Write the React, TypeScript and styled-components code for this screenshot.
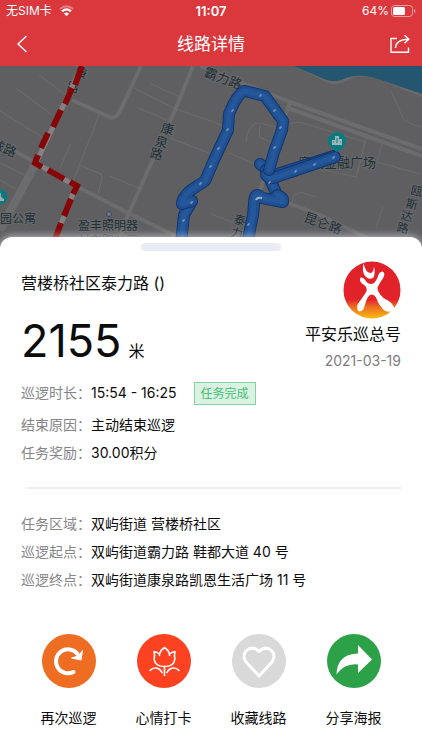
import React from "react";
import styled, { createGlobalStyle } from "styled-components";

const GlobalStyle = createGlobalStyle`
  * { box-sizing: border-box; }
  body {
    margin: 0;
    background: #fff;
    color: #0c0c0c;
    font-family: Inter, "Noto Sans CJK SC", sans-serif;
  }
  button { border: 0; padding: 0; background: none; color: inherit; font: inherit; cursor: pointer; }
  h1, h2, p, dl, dd { margin: 0; font-weight: 400; }
  svg { display: block; }
`;

const Page = styled.div`
  display: flex;
  flex-direction: column;
  min-height: 100vh;
`;

const TopBar = styled.header`
  background: #da383c;
  color: #fff;
`;

const StatusBar = styled.div`
  display: grid;
  grid-template-columns: 1fr auto 1fr;
  align-items: center;
  height: 22px;
  padding: 0 6px;
  font-size: 12px;
  line-height: 22px;
`;

const StatusGroup = styled.div<{ $end?: boolean }>`
  display: flex;
  align-items: center;
  justify-content: ${(p) => (p.$end ? "flex-end" : "flex-start")};
  gap: ${(p) => (p.$end ? 2 : 7)}px;
`;

const Clock = styled.time`
  font-size: 13px;
  font-weight: 600;
`;

const NavBar = styled.nav`
  display: grid;
  grid-template-columns: 44px 1fr 44px;
  align-items: center;
  height: 44px;
`;

const NavButton = styled.button`
  display: flex;
  align-items: center;
  justify-content: center;
  height: 44px;
`;

const PageTitle = styled.h1`
  font-size: 17px;
  line-height: 40px;
  text-align: center;
`;

const MapArea = styled.div`
  height: 184px;
  overflow: hidden;
  background: #5f5f62;

  svg { width: 100%; height: 100%; }
  text { font-family: "Noto Sans CJK SC", sans-serif; }
`;

const Sheet = styled.main`
  position: relative;
  flex: 1;
  margin-top: -13px;
  padding: 6px 21px 20px;
  border-radius: 12px 12px 0 0;
  background: #fff;
  box-shadow: 0 0 8px rgba(255, 255, 255, 0.7);
`;

const Handle = styled.div`
  width: 140px;
  height: 8px;
  margin: 0 auto;
  border-radius: 4px;
  background: #ebebf5;
`;

const Summary = styled.section`
  display: flex;
  justify-content: space-between;
  padding-top: 10px;
`;

const RouteBlock = styled.div`
  padding-top: 10px;
`;

const RouteName = styled.h2`
  font-size: 16px;
  line-height: 24px;
`;

const Distance = styled.p`
  display: flex;
  align-items: baseline;
  gap: 7px;
  margin-top: 18px;
  font-size: 16px;
  line-height: 56px;
`;

const DistanceValue = styled.span`
  font-size: 45px;
`;

const Account = styled.div`
  display: flex;
  flex-direction: column;
  align-items: flex-end;
`;

const AccountName = styled.p`
  margin-top: 3px;
  font-size: 16px;
  line-height: 24px;
`;

const DateText = styled.time`
  margin-top: 4px;
  color: #7d7d80;
  font-size: 14px;
  line-height: 22px;
`;

const Details = styled.dl<{ $top: number }>`
  display: grid;
  gap: 4px;
  padding-top: ${(p) => p.$top}px;
  font-size: 14px;
  line-height: 24px;
`;

const DetailRow = styled.div<{ $tagged: boolean }>`
  display: flex;
  align-items: center;
  margin-bottom: ${(p) => (p.$tagged ? 4 : 0)}px;
`;

const DetailLabel = styled.dt`
  flex: 0 0 69px;
  color: #858588;
  white-space: nowrap;
`;

const DetailValue = styled.dd`
  display: flex;
  align-items: center;
  gap: 17px;
`;

const Tag = styled.span`
  padding: 0 6px;
  border: 1px solid #82d3a0;
  background: #d9f2e2;
  color: #48bd75;
  font-size: 12px;
  line-height: 21px;
`;

const Divider = styled.hr`
  height: 2px;
  margin: 22px 0 0 6px;
  border: 0;
  background: #ededf3;
`;

const Actions = styled.footer`
  display: grid;
  grid-template-columns: repeat(4, 1fr);
  margin-top: 42px;
`;

const Action = styled.button`
  display: flex;
  flex-direction: column;
  align-items: center;
  gap: 18px;
  font-size: 14px;
  line-height: 24px;
  white-space: nowrap;
`;

const ActionDisc = styled.span<{ $color: string }>`
  display: flex;
  width: 54px;
  height: 54px;
  border-radius: 50%;
  background: ${(p) => p.$color};
`;

const WifiIcon = () => (
  <svg width="15" height="12" viewBox="0 0 15 12" fill="none" stroke="#fff" aria-hidden="true">
    <path d="M.8 4Q7.500-1.600 14.200 4" strokeWidth="1.800" opacity=".35" />
    <path d="M3 6.300Q7.500 2.600 12 6.300" strokeWidth="2.200" />
    <path d="M4.900 8.600Q7.500 6.400 10.100 8.600L7.500 11.200Z" fill="#fff" stroke="none" />
  </svg>
);

const BatteryIcon = () => (
  <svg width="25" height="12" viewBox="0 0 25 12" aria-hidden="true">
    <rect x=".5" y=".5" width="21" height="11" rx="3" fill="none" stroke="#fff" strokeOpacity=".5" />
    <rect x="2" y="2" width="12" height="8" rx="1.5" fill="#fff" />
    <path d="M23 4v4q1.500-.6 1.500-2T23 4Z" fill="#fff" opacity=".5" />
  </svg>
);

const BackIcon = () => (
  <svg width="12" height="18" viewBox="0 0 12 18" fill="none" stroke="#fff" strokeWidth="1.4" aria-hidden="true">
    <path d="M10.500 1 2 9l8.500 8" />
  </svg>
);

const ShareIcon = () => (
  <svg width="22" height="20" viewBox="0 0 22 20" fill="none" stroke="#fff" strokeWidth="1.4" aria-hidden="true">
    <path d="M8 4.500H2V18.300H19.500V13.500" />
    <path d="M6.500 14Q7 5.500 19.500 5.300M15.500 1.300l4.300 4-4.300 4" />
  </svg>
);

const Logo = () => (
  <svg width="58" height="58" viewBox="0 0 58 58" role="img" aria-label="平安乐巡">
    <defs>
      <linearGradient id="logoFill" x1="0" y1="0" x2="0" y2="1">
        <stop offset="0" stopColor="#df2129" />
        <stop offset=".67" stopColor="#e3232a" />
        <stop offset=".79" stopColor="#ec6a20" />
        <stop offset="1" stopColor="#fbbd10" />
      </linearGradient>
    </defs>
    <circle cx="29" cy="29" r="28.500" fill="url(#logoFill)" />
    <g fill="#fff">
      <path d="M20.500 2Q18.500 11 22.500 15.500Q26.500 19.500 30.500 16.500Q32.500 12 31 5.500Q30.500 11 28 12Q22.500 12 20.500 2Z" />
      <path d="M17.500 16.500Q20.500 16 22.500 19.500Q24.500 23 28.500 23Q32 22.500 34.500 16.500Q36 10.500 39.500 10.500Q42.500 11.500 40.500 16.500Q36.500 22 34.500 26.500Q34 31 40.500 37Q50.500 42 51 47Q48.500 53 41.500 49.500Q35.500 44 33.500 37.500Q31.500 33.500 28.500 33.500Q24.500 34 22 43.500Q20.500 50.500 16.500 50.500Q13 49.500 14.500 43.500Q20.500 35 23.500 30.500Q24.500 26.500 20.500 23.500Q15.500 20.500 17.500 16.500Z" />
    </g>
  </svg>
);

const Repeat = () => (
  <svg width="54" height="54" viewBox="0 0 54 54" aria-hidden="true">
    <path d="M31.500 38A12 12 0 1 1 35.500 20" fill="none" stroke="#fff" strokeWidth="4" strokeLinecap="round" />
    <path d="M40.500 16.500 39 26 29.500 24 34.500 22.500 38 20Z" fill="#fff" stroke="#fff" strokeWidth="1" strokeLinejoin="round" />
  </svg>
);

const Tulip = () => (
  <svg width="54" height="54" viewBox="0 0 54 54" fill="none" stroke="#fff" strokeWidth="1.600" strokeLinecap="round" strokeLinejoin="round" aria-hidden="true">
    <path d="M17 17.500Q20 18 22.500 20Q24 15.500 27.500 13.500Q31 15.500 32.500 20Q35 18 38 17.500Q37 21 37.800 25.500Q37 32.500 27.500 32.500Q18 32.500 17.200 25.500Q18 21 17 17.500ZM22.500 20V21.500M32.500 20V21.500M27.500 32.500V41.500M13 36.500Q15.500 33.500 19.500 34Q23.500 35 25 38.500M42 36.500Q39.500 33.500 35.500 34Q31.500 35 30 38.500" />
  </svg>
);

const Heart = () => (
  <svg width="54" height="54" viewBox="0 0 54 54" fill="none" stroke="#fff" strokeWidth="3" strokeLinejoin="round" aria-hidden="true">
    <path d="M27 42 14 28Q10 22 14 17Q20.500 11 27 17.500Q33.500 11 40 17Q44 22 40 28Z" />
  </svg>
);

const Forward = () => (
  <svg width="54" height="54" viewBox="0 0 54 54" aria-hidden="true">
    <path d="M9.500 40.500Q10 20 31 19.500V11L45 25.500 31 39V30.500Q17.500 29 9.500 40.500Z" fill="#fff" />
  </svg>
);

const ROUTE_PATHS = [
  "M192 201 184 215 181 244",
  "M260 164 274 175 334 156",
  "M266 170 277 195",
  "M277 195Q284 197 283 202L262 198Q254 190 254 204L253 215 247 244",
  "M335 157 276 177Q270 180 266 175",
  "M192 201 182 204Q181 199 191 190L205 181 214 160 228 130 229 114Q238 92 245 91L265 96 283 121 282 130 274 152 269 170",
];

const ROUTE_TICKS = [
  [184, 221], [192, 203], [201, 184], [211, 167], [219, 149], [228, 130], [233, 111],
  [261, 96], [275, 111], [281, 128], [275, 148], [334, 158], [315, 165], [296, 172], [270, 183], [249, 225],
];

const RouteMap = () => (
  <svg viewBox="0 66 422 184" preserveAspectRatio="xMidYMin slice" role="img" aria-label="巡逻路线地图">
    <rect y="66" width="422" height="184" fill="#5f5f62" />
    <path d="M294 66 326 82Q336 87 346 81Q358 74 375 78L422 97V66Z" fill="#6b6b6d" />
    <path d="M294 66 324 79Q336 84 346 78Q360 73 378 79L422 94V66Z" fill="#245670" />
    <g fill="none" stroke="#6c6c6e" strokeLinejoin="round">
      <path d="M0 230 36 163" strokeWidth="8" />
      <path d="M0 143 36 163 76 186 130 214 180 238M72 100 112 118Q116 118 120 111L141 66M193 66 176 108 128 215 118 244" strokeWidth="4" />
      <path d="M200 66 290 102 422 149M288 108 422 156M290 102 246 232M280 200 320 215 380 244" strokeWidth="4" />
      <path d="M39 75 70 98M16 88 52 115M0 111 45 139M99 115 72 184M70 144 60 169M79 165 101 174Q103 177 98 194M110 176 140 189M138 108 167 120M151 84 180 97M134 88 176 109 211 121M170 138 211 154M0 163 25 175M0 180 18 190M211 121 228 128M229 153 262 167M246 142Q248 122 260 123L275 127M260 125 259 137 271 142M290 124Q295 121 303 123L365 142 356 177 310 167M366 138 358 172M382 144 377 162 420 174M391 91 403 118Q407 124 422 127M294 195 300 192 316 197M294 195 290 207M383 207 376 228M211 214 240 225" strokeWidth="1" />
    </g>
    <g fill="#203037" stroke="#68686a" strokeWidth="2" paintOrder="stroke" fontSize="12">
      <text transform="translate(74 76) rotate(14)">康</text>
      <text transform="translate(66 90) rotate(15)">路</text>
      <text transform="translate(-10 147) rotate(24)" fontSize="13">球路</text>
      <text transform="translate(160 132) rotate(14)" fontSize="13">康</text>
      <text transform="translate(154 145) rotate(14)" fontSize="13">泉</text>
      <text transform="translate(149 157) rotate(14)" fontSize="13">路</text>
      <text transform="translate(203 76) rotate(20)" fontSize="13">霸力路</text>
      <text transform="translate(303 221) rotate(20)" fontSize="13">昆仑路</text>
      <text transform="translate(233 223) rotate(12)">泰</text>
      <text transform="translate(230 236) rotate(12)">力</text>
      <text transform="translate(410 194) rotate(12)">瓯</text>
      <text transform="translate(405 207) rotate(12)">斯</text>
      <text transform="translate(400 219) rotate(12)">达</text>
      <text transform="translate(396 231) rotate(12)">路</text>
      <text x="0" y="223">园公寓</text>
      <text x="78" y="230">盈丰照明器</text>
      <text x="78" y="245" opacity=".6">材有限公司</text>
      <text x="298" y="167" fontSize="13">鹿城金融广场</text>
    </g>
    <path d="M83 64 36 163 76 186 53 244" fill="none" stroke="#858183" strokeWidth="5" />
    <path d="M82 66 75 85M72 88 65 104M61 110 53 127M48 133 41 148M38 155 35 163 42 167M48 170 64 179M70 182 77 186 73 194M71 199 64 216M61 223 54 242" fill="none" stroke="#860507" strokeWidth="6" />
    <circle cx="109" cy="214" r="2.500" fill="#777780" stroke="#30466c" />
    <circle cx="0" cy="197" r="7.500" fill="#087b80" />
    <path d="M-3 200V195L1 193V197L4 199V201H-3Z" fill="#a3aaac" />
    <g fill="none" strokeLinecap="round" strokeLinejoin="round">
      {ROUTE_PATHS.map((d) => (
        <g key={d}>
          <path d={d} stroke="#12366d" strokeWidth="12" />
          <path d={d} stroke="#1f4f91" strokeWidth="10" />
          <path d={d} stroke="#24589a" strokeWidth="5" />
        </g>
      ))}
    </g>
    <path d="M256 200Q257 197 262 198" fill="none" stroke="#9fafc1" strokeWidth="2" />
    <g fill="none" stroke="#8fa7c4" strokeWidth="1">
      {ROUTE_TICKS.map(([x, y]) => (
        <path key={`${x}-${y}`} d={`M${x - 1} ${y + 1}V${y - 1}H${x + 1}`} />
      ))}
    </g>
    <path d="M328 141A9 9 0 1 1 346 141Q346 147 337 152Q328 147 328 141Z" fill="#087b80" />
    <path d="M332 145V140H335V136H339V139H342V145Z" fill="#a2b5b6" />
    <path d="M337 138V143M333 142H334M340 142H341" fill="none" stroke="#087b80" strokeWidth="1" />
  </svg>
);

type Detail = { label: string; value: string; tag?: string };

const taskDetails: Detail[] = [
  { label: "巡逻时长：", value: "15:54 - 16:25", tag: "任务完成" },
  { label: "结束原因：", value: "主动结束巡逻" },
  { label: "任务奖励：", value: "30.00积分" },
];

const placeDetails: Detail[] = [
  { label: "任务区域：", value: "双屿街道 营楼桥社区" },
  { label: "巡逻起点：", value: "双屿街道霸力路 鞋都大道 40 号" },
  { label: "巡逻终点：", value: "双屿街道康泉路凯恩生活广场 11 号" },
];

const actions = [
  { label: "再次巡逻", color: "#ef6c23", Icon: Repeat },
  { label: "心情打卡", color: "#fd4222", Icon: Tulip },
  { label: "收藏线路", color: "#d9d9d9", Icon: Heart },
  { label: "分享海报", color: "#2ca148", Icon: Forward },
];

const DetailList = ({ items, top }: { items: Detail[]; top: number }) => (
  <Details $top={top}>
    {items.map((item) => (
      <DetailRow key={item.label} $tagged={Boolean(item.tag)}>
        <DetailLabel>{item.label}</DetailLabel>
        <DetailValue>
          {item.value}
          {item.tag && <Tag>{item.tag}</Tag>}
        </DetailValue>
      </DetailRow>
    ))}
  </Details>
);

export default function App() {
  return (
    <Page>
      <GlobalStyle />
      <TopBar>
        <StatusBar>
          <StatusGroup>
            <span>无SIM卡</span>
            <WifiIcon />
          </StatusGroup>
          <Clock>11:07</Clock>
          <StatusGroup $end>
            <span>64%</span>
            <BatteryIcon />
          </StatusGroup>
        </StatusBar>
        <NavBar>
          <NavButton aria-label="返回"><BackIcon /></NavButton>
          <PageTitle>线路详情</PageTitle>
          <NavButton aria-label="分享"><ShareIcon /></NavButton>
        </NavBar>
      </TopBar>
      <MapArea><RouteMap /></MapArea>
      <Sheet>
        <Handle />
        <Summary>
          <RouteBlock>
            <RouteName>营楼桥社区泰力路 ()</RouteName>
            <Distance><DistanceValue>2155</DistanceValue>米</Distance>
          </RouteBlock>
          <Account>
            <Logo />
            <AccountName>平安乐巡总号</AccountName>
            <DateText>2021-03-19</DateText>
          </Account>
        </Summary>
        <DetailList items={taskDetails} top={2} />
        <Divider />
        <DetailList items={placeDetails} top={23} />
        <Actions>
          {actions.map(({ label, color, Icon }) => (
            <Action key={label}>
              <ActionDisc $color={color}><Icon /></ActionDisc>
              {label}
            </Action>
          ))}
        </Actions>
      </Sheet>
    </Page>
  );
}
